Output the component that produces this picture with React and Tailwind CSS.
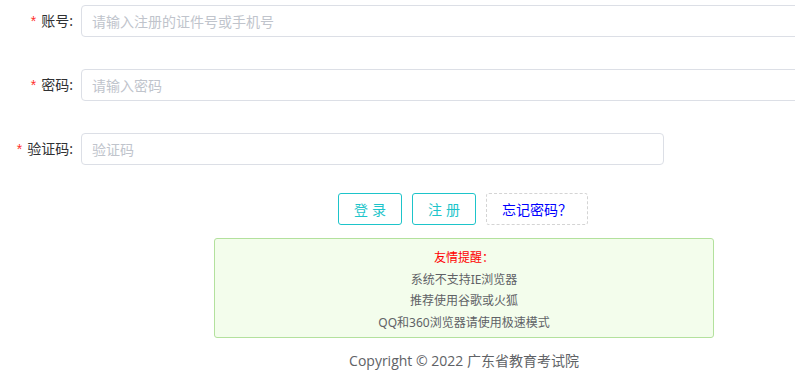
import React from 'react';

const font = { fontFamily: '"Noto Sans", "Noto Sans CJK SC", sans-serif' };

const FormRow = ({ label, placeholder, inputClass }) => (
  <div className="flex items-center h-[32px]">
    <label className="w-[81px] shrink-0 pr-[8px] text-right text-[14px] text-[#303133]">
      <span className="text-[#ff2d2d] mr-[5px] font-['Liberation_Sans']">*</span>
      {label}:
    </label>
    <input
      type="text"
      placeholder={placeholder}
      className={`h-[32px] rounded-[4px] border border-[#dcdfe6] px-[10px] text-[14px] text-[#606266] placeholder:text-[#c0c4cc] outline-none ${inputClass}`}
    />
  </div>
);

export default function App() {
  return (
    <div className="w-[795px] h-[380px] overflow-hidden bg-white" style={font}>
      <div className="w-[845px] pt-[5px]">
        <div className="flex flex-col gap-[32px]">
          <FormRow label="账号" placeholder="请输入注册的证件号或手机号" inputClass="w-[764px]" />
          <FormRow label="密码" placeholder="请输入密码" inputClass="w-[764px]" />
          <FormRow label="验证码" placeholder="验证码" inputClass="w-[583px]" />
        </div>

        {/* 按钮 */}
        <div className="ml-[81px] w-[764px] mt-[28px] flex justify-center gap-[10px]">
          <button className="w-[64px] h-[32px] rounded-[3px] border border-[#1dc4ca] text-[14px] text-[#1dc4ca] tracking-[4px] pl-[4px]">
            登录
          </button>
          <button className="w-[64px] h-[32px] rounded-[3px] border border-[#1dc4ca] text-[14px] text-[#1dc4ca] tracking-[4px] pl-[4px]">
            注册
          </button>
          <button className="w-[102px] h-[32px] rounded-[3px] border border-dashed border-[#d4d4d4] text-[14px] text-[#0000ff]">
            忘记密码？
          </button>
        </div>

        {/* 友情提醒 */}
        <div className="ml-[82px] w-[764px] mt-[13px] flex justify-center">
          <div className="w-[500px] h-[100px] rounded-[3px] border border-[#b3e19d] bg-[#f3fdec] pt-[8px] text-center text-[12px] leading-[21.7px] text-[#606266]">
            <p className="text-[#ff0000]">友情提醒：</p>
            <p>系统不支持IE浏览器</p>
            <p>推荐使用谷歌或火狐</p>
            <p>QQ和360浏览器请使用极速模式</p>
          </div>
        </div>

        <div className="ml-[82px] w-[764px] mt-[12px] text-center text-[14px] leading-[22px] text-[#606266] font-['Open_Sans','Noto_Sans_CJK_SC',sans-serif]">
          Copyright © 2022 广东省教育考试院
        </div>
      </div>
    </div>
  );
}
